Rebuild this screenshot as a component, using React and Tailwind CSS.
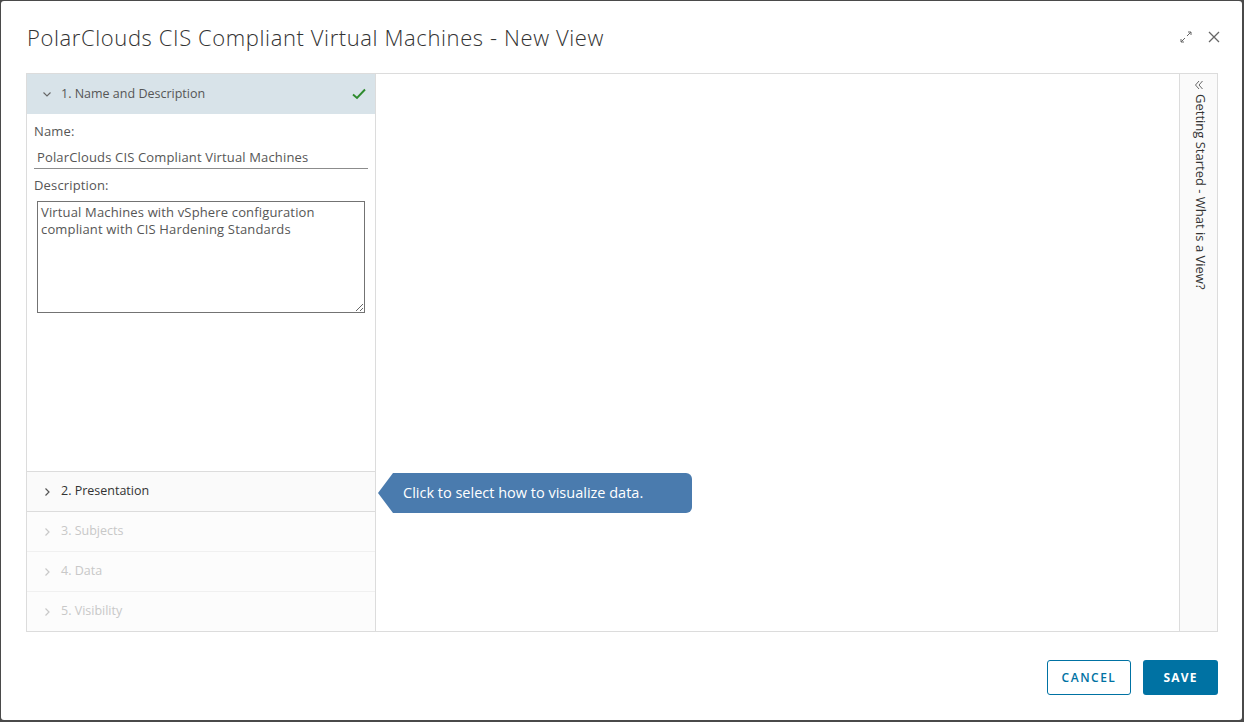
import React from "react";

const font = { fontFamily: '"Open Sans", "Liberation Sans", sans-serif' };

function ChevronRight({ className }) {
  return (
    <svg className={className} width="10" height="10" viewBox="0 0 10 10" fill="none">
      <path d="M3.5 1.5 L7 5 L3.5 8.5" stroke="currentColor" strokeWidth="1.2" />
    </svg>
  );
}
function ChevronDown({ className }) {
  return (
    <svg className={className} width="10" height="10" viewBox="0 0 10 10" fill="none">
      <path d="M1.5 3.5 L5 7 L8.5 3.5" stroke="currentColor" strokeWidth="1.1" />
    </svg>
  );
}

export default function App() {
  return (
    <div className="h-screen w-screen bg-[#4a4a4a] pt-px pl-px pr-[2px] pb-[2px]" style={font}>
      <div className="flex h-full flex-col rounded-[3px] bg-white">
        {/* header */}
        <div className="flex h-[72px] shrink-0 items-center pl-[26px] pr-[21px]">
          <h1 className="flex-1 text-[22px] font-light leading-none tracking-[0.6px] text-[#333]">
            PolarClouds CIS Compliant Virtual Machines - New View
          </h1>
          <div className="flex items-center gap-[14px] text-[#666]">
            <svg width="14" height="14" viewBox="0 0 14 14" fill="none" stroke="currentColor" strokeWidth="1">
              <path d="M8 6 L12 2 M9 2 H12 V5" />
              <path d="M6 8 L2 12 M2 9 V12 H5" />
            </svg>
            <svg width="14" height="14" viewBox="0 0 14 14" fill="none" stroke="currentColor" strokeWidth="1.3">
              <path d="M2 2 L12 12 M12 2 L2 12" />
            </svg>
          </div>
        </div>

        {/* content */}
        <div className="ml-[25px] mr-[24px] flex h-[559px] shrink-0 border border-[#dcdcdc]">
          {/* left */}
          <div className="flex w-[349px] shrink-0 flex-col border-r border-[#dcdcdc]">
            <div className="flex h-[40px] shrink-0 items-center bg-[#d8e3e9] pl-[15px] pr-[8px] text-[12.5px] text-[#565656]">
              <ChevronDown className="mr-[9px] text-[#666]" />
              <span className="flex-1">1. Name and Description</span>
              <svg width="16" height="16" viewBox="0 0 16 16" fill="none">
                <path d="M2 8.5 L6 12 L14 3.5" stroke="#2e8b2e" strokeWidth="1.9" />
              </svg>
            </div>
            <div className="flex flex-1 flex-col px-[7px] pt-[9px]">
              <div className="text-[13px] leading-[17px] tracking-[0.15px] text-[#565656]">Name:</div>
              <div className="mt-[9px] border-b border-[#8c8c8c] pb-[2px] pl-[3px] text-[13px] leading-[17px] tracking-[0.15px] text-[#565656]">
                PolarClouds CIS Compliant Virtual Machines
              </div>
              <div className="mt-[8px] text-[13px] leading-[17px] tracking-[0.15px] text-[#565656]">Description:</div>
              <textarea
                readOnly
                className="mt-[7px] ml-[3px] mr-[3px] h-[112px] resize-y border border-[#737373] px-[3px] py-[2px] text-[13px] leading-[17px] tracking-[0.15px] text-[#565656] outline-none"
                style={font}
                defaultValue={"Virtual Machines with vSphere configuration compliant with CIS Hardening Standards"}
              />
            </div>
            <div className="flex h-[40px] shrink-0 items-center border-t border-[#dcdcdc] bg-[#fafafa] pl-[15px] text-[12.5px] text-[#333]">
              <ChevronRight className="mr-[9px] text-[#555]" />
              2. Presentation
            </div>
            {["3. Subjects", "4. Data", "5. Visibility"].map((t, i) => (
              <div
                key={t}
                className={`flex h-[40px] shrink-0 items-center border-t bg-[#fcfcfc] pl-[15px] text-[12.5px] text-[#c8c8c8] ${i === 0 ? "border-[#dcdcdc]" : "border-[#f0f0f0]"}`}
              >
                <ChevronRight className="mr-[9px] text-[#c8c8c8]" />
                {t}
              </div>
            ))}
          </div>

          {/* center */}
          <div className="relative flex-1">
            <div className="absolute left-[2px] top-[399px] flex h-[40px] items-stretch">
              <div className="h-0 w-0 border-y-[20px] border-r-[15px] border-y-transparent border-r-[#4a7bae]" />
              <div className="flex items-center rounded-r-[6px] bg-[#4a7bae] pl-[10px] pr-[49px] text-[14.5px] text-white">
                Click to select how to visualize data.
              </div>
            </div>
          </div>

          {/* right sidebar */}
          <div className="flex w-[38px] shrink-0 flex-col items-center border-l border-[#dcdcdc] bg-[#fafafa] pt-[5px]">
            <svg width="12" height="12" viewBox="0 0 12 12" fill="none" stroke="#666" strokeWidth="1">
              <path d="M6 2 L2.5 6 L6 10 M9.5 2 L6 6 L9.5 10" />
            </svg>
            <div className="ml-[3px] mt-[3px] text-[13px] text-[#333] [writing-mode:vertical-rl]">
              Getting Started - What is a View?
            </div>
          </div>
        </div>

        {/* footer */}
        <div className="flex justify-end gap-[12px] pr-[24px] pt-[28px]">
          <button className="h-[35px] w-[84px] rounded-[3px] border border-[#0072a3] text-[12px] font-semibold tracking-[1.5px] text-[#0072a3]">
            CANCEL
          </button>
          <button className="h-[35px] w-[75px] rounded-[3px] bg-[#0072a3] text-[12px] font-bold tracking-[1.2px] text-white">
            SAVE
          </button>
        </div>
      </div>
    </div>
  );
}
